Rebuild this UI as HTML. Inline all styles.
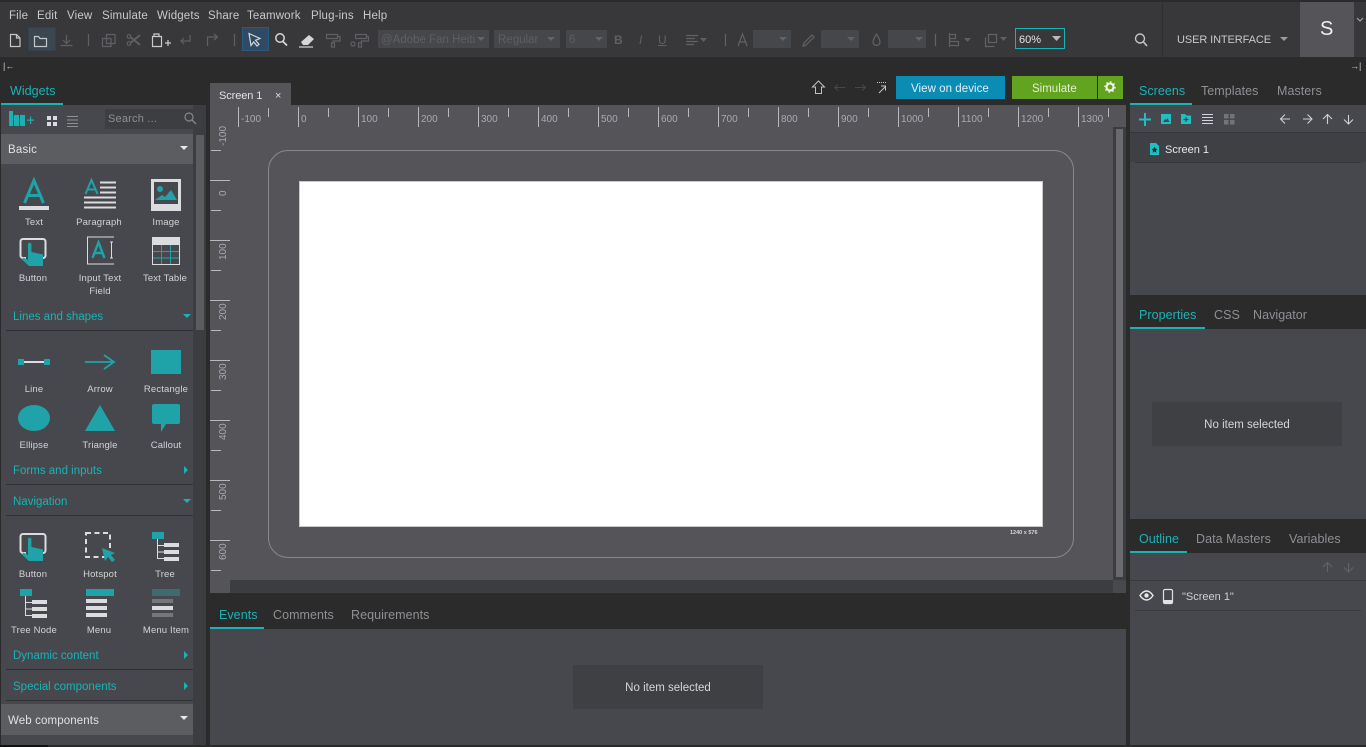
<!DOCTYPE html>
<html><head><meta charset="utf-8"><style>
html,body{margin:0;padding:0;background:#2b2b2c;overflow:hidden}
#p{position:relative;width:1366px;height:747px;overflow:hidden;background:#2b2b2c;font-family:"Liberation Sans",sans-serif;font-size:11px;color:#d5d6d8}
#p div,#p span,#p svg{position:absolute}
span{white-space:nowrap;line-height:14px}
.m{font-size:11.5px;top:9px;color:#c8c9cb;letter-spacing:.15px}
.l{font-size:9.5px;color:#d2d3d5;text-align:center;width:70px;letter-spacing:.15px}
.c{font-size:11.5px;color:#19b3b6;left:13px;letter-spacing:0}
.tb{font-size:12.5px;color:#8f9094;letter-spacing:.05px}
.on{color:#19b3b6}
.u{background:#19b3b6;height:2px}
.r{font-size:10px;color:#a9abb0;top:113px}
.v{font-size:10px;color:#a9abb0;left:217px;transform:rotate(-90deg);transform-origin:0 0;display:block}
.d{background:#46474a;height:18px;top:30px}
.g{color:#5e5f62;font-size:11.5px;top:33px}
.sep{background:#303032;height:1px;left:6px;width:187px}
svg{overflow:visible}
</style></head><body><div id="p">
<!-- toolbar -->
<div style="left:0;top:2px;width:1366px;height:55px;background:#38383b"></div>
<div style="left:1162px;top:2px;width:1px;height:55px;background:#2e2e30"></div>
<div style="left:1300px;top:2px;width:54px;height:55px;background:#545459"></div>
<span style="left:1320px;top:22px;font-size:20px;color:#f0f0f0">S</span>
<span class="m" style="left:9px">File</span><span class="m" style="left:37px">Edit</span><span class="m" style="left:67px">View</span><span class="m" style="left:102px">Simulate</span><span class="m" style="left:157px">Widgets</span><span class="m" style="left:208px">Share</span><span class="m" style="left:247px">Teamwork</span><span class="m" style="left:311px">Plug-ins</span><span class="m" style="left:363px">Help</span>
<div style="left:28px;top:27px;width:26px;height:22px;background:#3a4650;border:1px solid #33414c"></div>
<div style="left:242px;top:27px;width:25px;height:22px;background:#2f4a62;border:1px solid #2c5a7e"></div>
<svg style="left:0;top:0" width="1366" height="57" fill="none" stroke-width="1.2">
<g stroke="#c4c5c7"><path d="M10.500 34.500h6l3.500 3.500v8.500h-9.500zM16.500 34.500v3.500h3.500"/><path d="M34.500 36.500h4l1.500 2h6.500v8h-12z"/></g>
<g stroke="#5f6063"><path d="M66.500 35v8M63 40l3.500 3.500 3.500-3.500M60.500 45.500h12"/><path d="M88.500 34v12"/><path d="M106.500 34.500h8.500v9h-8.500zM102.500 38.500h8.500v8h-8.500z"/><path d="M131 37.500l9 7.500M131 42.500l9-7.500" stroke-width="1.800"/><circle cx="129" cy="36.500" r="1.800"/><circle cx="129" cy="43.500" r="1.800"/><path d="M190 35v6h-9M184 38l-3 3 3 3" stroke-width="1.200"/><path d="M207.500 46v-9h10M214 34l3.500 3-3.500 3"/><path d="M234.500 34v12"/></g>
<g stroke="#c9cacc"><path d="M152.500 36.500h9v10h-9zM154 34h5v2.500h-5z" /><path d="M165 43h6M168 40v6"/></g>
<path d="M249 33.500l11 5-4.500 1.800 3.500 4-2 1.700-3.300-4-2.700 3.500z" stroke="#d5d6d8"/>
<circle cx="280" cy="38" r="4.200" stroke="#d5d6d8" stroke-width="1.500"/><path d="M283 41.500l4 4" stroke="#d5d6d8" stroke-width="1.800"/>
<path d="M301 42l8-7 5 4-6 6h-5z" fill="#d5d6d8"/><path d="M299 47h14" stroke="#d5d6d8"/>
<g stroke="#5f6063"><path d="M326.500 34.500h11v4h-11zM337 36.500h3v4.500h-7v2M331.500 43h3v4h-3z"/><path d="M355.500 34.500h11v4h-11zM366 36.500h2.500v4.500h-7v2M358.500 43h3v4h-3z"/><circle cx="353" cy="44" r="2"/></g>
<g stroke="#616265"><path d="M686 35.500h12M686 38.500h9M686 41.500h12M686 44.500h8"/><path d="M725.500 34v12"/><path d="M738 46l4.500-12 4.500 12M739.500 42h6"/><path d="M803 46l1-3 8-8 2 2-8 8z"/><path d="M876.500 34c-2 3.500-3.500 5.500-3.500 8a3.500 3.500 0 0 0 7 0c0-2.500-1.500-4.500-3.500-8z"/><path d="M935.500 34v12"/><path d="M949.500 33v14M949.500 34.500h6v4h-6zM949.500 41.500h9v4h-9z"/><path d="M988.500 34.500h8v8h-8zM985.500 37.500v9h9"/></g>
<g fill="#5f6063"><path d="M964 38h7l-3.500 4zM1000 37h7l-3.500 4zM700 38h7l-3.500 4z"/></g>
<circle cx="1140" cy="38.500" r="4.500" stroke="#c4c5c7" stroke-width="1.400"/><path d="M1143.500 42l3.500 4" stroke="#c4c5c7" stroke-width="1.600"/>
<path d="M1357 18l3 3 3-3" stroke="#a0a1a4"/>
<path d="M1280 37h8l-4 4z" fill="#9a9b9e"/>
</svg>
<div class="d" style="left:378px;width:111px"></div><span class="g" style="left:381px">@Adobe Fan Heiti</span>
<div class="d" style="left:494px;width:66px"></div><span class="g" style="left:498px">Regular</span>
<div class="d" style="left:566px;width:41px"></div><span class="g" style="left:569px">6</span>
<div class="d" style="left:753px;width:38px"></div><div class="d" style="left:821px;width:38px"></div><div class="d" style="left:888px;width:38px"></div>
<svg style="left:0;top:0" width="1366" height="57"><g fill="#626366"><path d="M477 37h8l-4 4zM547 37h8l-4 4zM595 37h8l-4 4zM779 37h8l-4 4zM847 37h8l-4 4zM915 37h8l-4 4z"/></g></svg>
<span style="left:614px;top:33px;font-size:12px;font-weight:bold;color:#606164">B</span><span style="left:639px;top:33px;font-size:12px;font-style:italic;color:#606164">I</span><span style="left:658px;top:33px;font-size:12px;color:#606164;text-decoration:underline">U</span>
<div style="left:1015px;top:28px;width:48px;height:19px;border:1px solid #19b3b6"></div>
<span style="left:1019px;top:33px;font-size:11px;color:#e4e4e5">60%</span>
<svg style="left:1052px;top:36px" width="10" height="6"><path d="M0 0h9l-4.500 5z" fill="#b9babc"/></svg>
<span style="left:1177px;top:33px;font-size:11px;color:#c8c9cb;letter-spacing:-.1px">USER INTERFACE</span>

<!-- second band -->
<span style="left:3px;top:59px;font-size:9px;color:#ccc">|←</span>
<span style="left:1350px;top:59px;font-size:9px;color:#ccc">→|</span>
<!-- Left -->
<span class="tb on" style="left:10px;top:84px">Widgets</span><div class="u" style="left:1px;top:103px;width:62px"></div>
<div style="left:1px;top:105px;width:192px;height:640px;background:#47484d"></div>
<div style="left:193px;top:105px;width:13px;height:640px;background:#3c3d40"></div>
<div style="left:196px;top:135px;width:8px;height:195px;background:#5b5c60"></div>
<div style="left:105px;top:109px;width:97px;height:20px;background:#3d3e42"></div>
<span style="left:108px;top:112px;font-size:11px;color:#8e8f93;letter-spacing:.2px">Search ...</span>
<svg style="left:0;top:105px" width="206" height="30" fill="none"><g fill="#1bb0b3"><rect x="9" y="6" width="4" height="15"/><rect x="14" y="10" width="5" height="11"/><rect x="20" y="10" width="5" height="11"/><path d="M27 14.500h7v1.200h-7zM30 11.500h1.200v7.500H30z"/></g><g fill="#dcdcde"><rect x="47" y="11" width="4" height="4"/><rect x="53" y="11" width="4" height="4"/><rect x="47" y="17" width="4" height="4"/><rect x="53" y="17" width="4" height="4"/></g><path d="M67 11.500h11M67 15h11M67 18.500h11M67 21.500h11" stroke="#8f9094"/><circle cx="189" cy="12" r="4" stroke="#85868a" stroke-width="1.200"/><path d="M192 15l4 4" stroke="#85868a" stroke-width="1.300"/></svg>
<div style="left:1px;top:134px;width:192px;height:30px;background:#5b5d61"></div>
<span style="left:8px;top:143px;font-size:11.5px;color:#e0e1e2;letter-spacing:.2px">Basic</span>
<div style="left:1px;top:704px;width:192px;height:31px;background:#5b5d61"></div>
<span style="left:8px;top:714px;font-size:11.5px;color:#e0e1e2;letter-spacing:.12px">Web components</span>
<svg style="left:0;top:0" width="206" height="747"><g fill="#e8e8e9"><path d="M180 146h8l-4 4zM180 716h8l-4 4z"/></g><g fill="#19b3b6"><path d="M183 314h8l-4 4zM183 499h8l-4 4zM184 466v8l4-4zM184 651v8l4-4zM184 682v8l4-4z"/></g></svg>
<div class="sep" style="top:330px"></div><div class="sep" style="top:484px"></div><div class="sep" style="top:515px"></div><div class="sep" style="top:669px"></div><div class="sep" style="top:700px"></div>
<span class="c" style="top:310px">Lines and shapes</span><span class="c" style="top:464px">Forms and inputs</span><span class="c" style="top:495px">Navigation</span><span class="c" style="top:649px">Dynamic content</span><span class="c" style="top:680px">Special components</span>
<span class="l" style="left:-1px;top:216px">Text</span><span class="l" style="left:64px;top:216px">Paragraph</span><span class="l" style="left:131px;top:216px">Image</span>
<span class="l" style="left:-2px;top:272px">Button</span><span class="l" style="left:65px;top:272px;line-height:13px">Input Text<br>Field</span><span class="l" style="left:130px;top:272px">Text Table</span>
<span class="l" style="left:-1px;top:383px">Line</span><span class="l" style="left:65px;top:383px">Arrow</span><span class="l" style="left:131px;top:383px">Rectangle</span>
<span class="l" style="left:-1px;top:439px">Ellipse</span><span class="l" style="left:65px;top:439px">Triangle</span><span class="l" style="left:131px;top:439px">Callout</span>
<span class="l" style="left:-2px;top:568px">Button</span><span class="l" style="left:65px;top:568px">Hotspot</span><span class="l" style="left:130px;top:568px">Tree</span>
<span class="l" style="left:-1px;top:624px">Tree Node</span><span class="l" style="left:64px;top:624px">Menu</span><span class="l" style="left:131px;top:624px">Menu Item</span>
<svg style="left:0;top:0" width="206" height="747" fill="none">
<!-- Text -->
<path d="M24.500 203L34 180.500 43.500 203M28 195.500h12" stroke="#1fa3a9" stroke-width="3"/><rect x="19" y="206" width="30" height="4" fill="#dcdcde"/>
<!-- Paragraph -->
<path d="M85.500 194l6-14 6 14M87.500 189.500h8" stroke="#1fa3a9" stroke-width="2"/>
<path d="M100 182.500h16M100 187.500h16M100 192.500h16M84 197.500h32M84 202.500h32M84 207.500h32" stroke="#dcdcde" stroke-width="2"/>
<!-- Image -->
<rect x="151" y="179" width="30" height="32" fill="#dcdcde"/><rect x="154" y="182" width="24" height="22" fill="#47484d"/><circle cx="160" cy="189" r="3" fill="#1fa3a9"/><path d="M155 200l7-5 3 2 6-7 6 10z" fill="#1fa3a9"/>
<!-- Button -->
<g id="b"><path d="M26 258h-3a2.500 2.500 0 0 1-2.500-2.500v-14a2.500 2.500 0 0 1 2.500-2.500h20a2.500 2.500 0 0 1 2.500 2.500v14a2.500 2.500 0 0 1-2.500 2.500h-.5" stroke="#dcdcde" stroke-width="2"/><path d="M28 244.500a1.700 1.700 0 0 1 3.400 0V252l11.600 2.500V266H29l-7-6.500 1.500-2 4.500 2.500z" fill="#1fa3a9"/></g>
<!-- Input -->
<path d="M114 237h-26.500v27h26.500" stroke="#dcdcde"/><path d="M92.500 258L98.500 242.500 104.500 258M94.500 253h8" stroke="#1fa3a9" stroke-width="2.400"/><path d="M110 242h3M111.500 242v16M110 258h3" stroke="#dcdcde"/>
<!-- Table -->
<rect x="152.500" y="237.500" width="27" height="27" stroke="#dcdcde"/><rect x="152" y="237" width="28" height="8" fill="#dcdcde"/><path d="M153 251.500h26M153 258h26M161.500 245v19M170.500 245v19" stroke="#1fa3a9"/>
<!-- Line -->
<rect x="18" y="359" width="6" height="6" fill="#1fa3a9"/><rect x="44" y="359" width="6" height="6" fill="#1fa3a9"/><rect x="24" y="361" width="20" height="2" fill="#dcdcde"/>
<path d="M85 362h29M104 355l10 7-10 7" stroke="#1fa3a9" stroke-width="1.800"/>
<rect x="151" y="350" width="30" height="24" fill="#1fa3a9"/>
<ellipse cx="34" cy="418" rx="16" ry="13" fill="#1fa3a9"/>
<path d="M100 405l15 26h-30z" fill="#1fa3a9"/>
<path d="M154 404h24a2 2 0 0 1 2 2v16a2 2 0 0 1-2 2h-12l-5 8v-8h-7a2 2 0 0 1-2-2v-16a2 2 0 0 1 2-2z" fill="#1fa3a9"/>
<!-- Nav button -->
<use href="#b" y="295"/>
<!-- Hotspot -->
<rect x="86" y="533" width="24" height="24" stroke="#dcdcde" stroke-width="2" stroke-dasharray="5 3.500"/><path d="M102 548l13 5-4 2 4 5-3 2-4-5-3 4z" fill="#1fa3a9"/>
<!-- Tree -->
<g id="t"><rect x="152" y="532" width="12" height="7" fill="#1fa3a9"/><path d="M157.500 539v20M157.500 545.500h7M157.500 552h7M157.500 558.500h7" stroke="#dcdcde"/><rect x="164" y="543" width="15" height="4" fill="#dcdcde"/><rect x="164" y="550" width="15" height="4" fill="#dcdcde"/><rect x="164" y="557" width="15" height="4" fill="#dcdcde"/></g>
<use href="#t" x="-132" y="57"/>
<!-- Menu -->
<rect x="86" y="589" width="28" height="7" fill="#1fa3a9"/><g fill="#dcdcde"><rect x="86" y="599" width="21" height="4"/><rect x="86" y="606" width="21" height="4"/><rect x="86" y="613" width="21" height="4"/></g>
<rect x="152" y="589" width="28" height="7" fill="#3f6a6e"/><rect x="152" y="599" width="21" height="4" fill="#75767a"/><rect x="152" y="606" width="21" height="4" fill="#dcdcde"/><rect x="152" y="613" width="21" height="4" fill="#75767a"/>
</svg>

<!-- Center -->
<div style="left:210px;top:105px;width:903px;height:475px;background:#545459"></div>
<div style="left:210px;top:83px;width:81px;height:22px;background:#545459"></div>
<span style="left:219px;top:89px;font-size:11px;color:#e2e3e4;letter-spacing:-.1px">Screen 1</span><span style="left:275px;top:89px;font-size:11px;color:#ddd">×</span>
<div style="left:230px;top:580px;width:883px;height:13px;background:#3c3d40"></div>
<div style="left:210px;top:580px;width:20px;height:13px;background:#545459"></div>
<div style="left:1113px;top:127px;width:13px;height:453px;background:#3c3d40"></div>
<div style="left:1116px;top:129px;width:7px;height:448px;background:#6a6b6f"></div>
<div style="left:1113px;top:580px;width:13px;height:13px;background:#48494d"></div>
<div style="left:1113px;top:105px;width:13px;height:22px;background:#545459"></div>
<div style="left:268px;top:150px;width:804px;height:406px;border:1px solid #88898d;border-radius:20px"></div>
<div style="left:299px;top:181px;width:742px;height:344px;background:#fff;border:1px solid #c9c9cb"></div>
<span style="left:1010px;top:526px;font-size:5.500px;font-weight:bold;color:#d8d8da">1240 x 576</span>
<!-- ruler -->
<svg style="left:0;top:0" width="1366" height="747" fill="none" stroke="#b8b9bc"><path d="M238.500 107v20M298.500 107v20M358.500 107v20M418.500 107v20M478.500 107v20M538.500 107v20M598.500 107v20M658.500 107v20M718.500 107v20M778.500 107v20M838.500 107v20M898.500 107v20M958.500 107v20M1018.500 107v20M1078.500 107v20M268.500 108v9M328.500 108v9M388.500 108v9M448.500 108v9M508.500 108v9M568.500 108v9M628.500 108v9M688.500 108v9M748.500 108v9M808.500 108v9M868.500 108v9M928.500 108v9M988.500 108v9M1048.500 108v9M1108.500 108v9"/><path d="M210 180.500h20M210 240.500h20M210 300.500h20M210 360.500h20M210 420.500h20M210 480.500h20M210 540.500h20M211 150.500h10M211 210.500h10M211 270.500h10M211 330.500h10M211 390.500h10M211 450.500h10M211 510.500h10M211 570.500h10"/></svg>
<span class="r" style="left:241px">-100</span><span class="r" style="left:301px">0</span><span class="r" style="left:361px">100</span><span class="r" style="left:421px">200</span><span class="r" style="left:481px">300</span><span class="r" style="left:541px">400</span><span class="r" style="left:601px">500</span><span class="r" style="left:661px">600</span><span class="r" style="left:721px">700</span><span class="r" style="left:781px">800</span><span class="r" style="left:841px">900</span><span class="r" style="left:901px">1000</span><span class="r" style="left:961px">1100</span><span class="r" style="left:1021px">1200</span><span class="r" style="left:1081px">1300</span>
<span class="v" style="top:146px">-100</span><span class="v" style="top:196px">0</span><span class="v" style="top:260px">100</span><span class="v" style="top:320px">200</span><span class="v" style="top:380px">300</span><span class="v" style="top:440px">400</span><span class="v" style="top:500px">500</span><span class="v" style="top:560px">600</span>
<!-- top right controls -->
<svg style="left:0;top:0" width="1366" height="105" fill="none"><path d="M818.500 81l6 6h-3v6.500h-6V87h-3z" stroke="#c0c1c3"/><path d="M845 87.500h-10M838 84.500l-3.500 3-0 0 3.500 3M855 87.500h10M862 84.500l3.500 3-3.500 3" stroke="#47484a"/><path d="M877 82.500h10" stroke="#c5c6c8" stroke-dasharray="1 1"/><path d="M879 93l6-6M881 86h4.500v4.500" stroke="#c5c6c8"/></svg>
<div style="left:896px;top:76px;width:109px;height:23px;background:#0b8cb5"></div><span style="left:911px;top:82px;font-size:11.5px;color:#e6eff3;letter-spacing:.05px">View on device</span>
<div style="left:1012px;top:76px;width:85px;height:23px;background:#62a31f"></div><span style="left:1032px;top:82px;font-size:11.5px;color:#e3eed6">Simulate</span>
<div style="left:1098px;top:76px;width:25px;height:23px;background:#62a31f"></div>
<svg style="left:1104px;top:81px" width="12" height="12"><circle cx="6" cy="6" r="3.500" fill="none" stroke="#eef3e4" stroke-width="2.200"/><circle cx="6" cy="6" r="5" fill="none" stroke="#eef3e4" stroke-width="1.500" stroke-dasharray="1.500 2.400"/></svg>
<!-- bottom center -->
<span class="tb on" style="left:219px;top:608px">Events</span><div class="u" style="left:210px;top:627px;width:54px"></div>
<span class="tb" style="left:273px;top:608px">Comments</span><span class="tb" style="left:351px;top:608px">Requirements</span>
<div style="left:210px;top:629px;width:916px;height:116px;background:#47484d"></div>
<div style="left:573px;top:665px;width:190px;height:44px;background:#3f4044"></div>
<span style="left:573px;width:190px;text-align:center;top:681px;font-size:11.5px;color:#d5d6d8">No item selected</span>
<!-- right -->
<span class="tb on" style="left:1139px;top:84px">Screens</span><div class="u" style="left:1130px;top:103px;width:62px"></div>
<span class="tb" style="left:1201px;top:84px">Templates</span><span class="tb" style="left:1277px;top:84px">Masters</span>
<div style="left:1130px;top:105px;width:236px;height:190px;background:#47484d"></div>
<div style="left:1130px;top:133px;width:236px;height:29px;background:#3f4044"></div>
<div style="left:1130px;top:132px;width:236px;height:1px;background:#353639"></div>
<div style="left:1135px;top:162px;width:226px;height:1px;background:#37383b"></div>
<span style="left:1165px;top:143px;font-size:11px;color:#e6e7e8">Screen 1</span>
<svg style="left:1130px;top:105px" width="236" height="60" fill="none"><path d="M15 8v13M9 14.500h12" stroke="#1fc0c3" stroke-width="2"/><rect x="31" y="9" width="10" height="10" fill="#1fc0c3"/><path d="M33 17l2-3 1.500 1 1-2 2 4z" fill="#47484d"/><path d="M51 9h4l1.500 1.500H61V19H51z" fill="#1fc0c3"/><path d="M56 12v5M53.500 14.500h5" stroke="#47484d" stroke-width="1.200"/><path d="M72 9.500h11M72 12.500h11M72 15.500h11M72 18.500h11" stroke="#d5d6d8"/><g fill="#737478"><rect x="94" y="9" width="4.500" height="4.500"/><rect x="100" y="9" width="4.500" height="4.500"/><rect x="94" y="15" width="4.500" height="4.500"/><rect x="100" y="15" width="4.500" height="4.500"/></g><path d="M160 14h-9M155 9.500l-4.500 4.500 4.500 4.500M173 14h9M177.500 9.500l4.500 4.500-4.500 4.500M197.500 19v-9M193 14l4.500-4.500 4.500 4.500M218.500 10v9M214 14.500l4.500 4.500 4.500-4.500" stroke="#cfd0d2" stroke-width="1.100"/><path d="M20 38h6l3 3v9h-9z" fill="#1fc0c3"/><path d="M24.500 41.500l1 2.300 2 .2-1.500 1.500.5 2.300-2-1.200-2 1.200.5-2.300-1.500-1.500 2-.2z" fill="#2b2b2c"/></svg>

<span class="tb on" style="left:1139px;top:308px">Properties</span><div class="u" style="left:1130px;top:327px;width:75px"></div>
<span class="tb" style="left:1214px;top:308px">CSS</span><span class="tb" style="left:1253px;top:308px">Navigator</span>
<div style="left:1130px;top:329px;width:236px;height:190px;background:#47484d"></div>
<div style="left:1152px;top:402px;width:190px;height:44px;background:#3f4044"></div>
<span style="left:1152px;width:190px;text-align:center;top:418px;font-size:11.5px;color:#d5d6d8">No item selected</span>

<span class="tb on" style="left:1139px;top:532px">Outline</span><div class="u" style="left:1130px;top:551px;width:57px"></div>
<span class="tb" style="left:1196px;top:532px">Data Masters</span><span class="tb" style="left:1289px;top:532px">Variables</span>
<div style="left:1130px;top:553px;width:236px;height:192px;background:#47484d"></div>
<div style="left:1130px;top:580px;width:236px;height:1px;background:#38393c"></div>
<div style="left:1135px;top:610px;width:226px;height:1px;background:#38393c"></div>
<span style="left:1182px;top:590px;font-size:11px;color:#cfd0d2">"Screen 1"</span>
<svg style="left:1130px;top:553px" width="236" height="60" fill="none"><path d="M197.500 19v-9M193 14l4.500-4.500 4.500 4.500M218.500 10v9M214 14.500l4.500 4.500 4.500-4.500" stroke="#626367" stroke-width="1.100"/><path d="M10 42.500c2-3 4.500-4.500 6.500-4.500s4.500 1.500 6.500 4.500c-2 3-4.500 4.500-6.500 4.500s-4.500-1.500-6.500-4.500z" stroke="#e8e8e9" stroke-width="1.400"/><circle cx="16.500" cy="42.500" r="2.200" fill="#e8e8e9"/><rect x="33.500" y="36.500" width="9" height="14" rx="1.500" stroke="#e0e1e2" stroke-width="1.200"/><rect x="33" y="47" width="10" height="3.500" fill="#e0e1e2"/></svg>
<div style="left:0;top:745px;width:48px;height:2px;background:#111"></div>
</div></body></html>
